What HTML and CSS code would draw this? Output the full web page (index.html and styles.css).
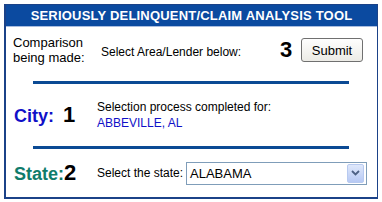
FILE: index.html
```html
<!DOCTYPE html>
<html>
<head>
<meta charset="utf-8">
<link rel="stylesheet" href="styles.css">
</head>
<body>
<div class="tool">
  <div class="header">SERIOUSLY DELINQUENT/CLAIM ANALYSIS TOOL</div>
  <div class="content">
    <div class="row row1">
      <div class="label-small">Comparison<br>being made:</div>
      <div class="middle">Select Area/Lender below:</div>
      <div class="num">3</div>
      <button class="submit">Submit</button>
    </div>
    <div class="rule"></div>
    <div class="row row2">
      <div class="lead"><span class="city">City:</span><span class="num num-gap">1</span></div>
      <div class="info">Selection process completed for:<br><span class="place">ABBEVILLE, AL</span></div>
    </div>
    <div class="rule"></div>
    <div class="row row3">
      <div class="lead"><span class="state">State:</span><span class="num">2</span></div>
      <div class="info">Select the state:</div>
      <div class="select">
        <span class="sel-text">ALABAMA</span>
        <span class="sel-btn"><svg width="9" height="6" viewBox="0 0 9 6"><path d="M1 1 L4.5 4.5 L8 1" fill="none" stroke="#4d6185" stroke-width="1.8"/></svg></span>
      </div>
    </div>
  </div>
</div>
</body>
</html>
```
FILE: styles.css
```css
html, body {
  margin: 0;
  padding: 0;
  background: #fff;
}
body {
  padding: 4px;
  font-family: "Liberation Sans", Arial, sans-serif;
}
.tool {
  width: 371px;
  border-left: 2px solid #1b4288;
  border-bottom: 2px solid #1b4288;
  border-right: 1px solid #1b4288;
  border-top: 1px solid #1b4288;
  box-sizing: content-box;
}
.header {
  background: #0b4aa0;
  color: #fff;
  font-weight: bold;
  font-size: 13px;
  letter-spacing: 0.2px;
  text-align: center;
  height: 21px;
  line-height: 21px;
  border-bottom: 1px solid #a9bde0;
}
.content {
  display: flex;
  flex-direction: column;
}
.row {
  display: flex;
  align-items: center;
}
.row1 {
  height: 46px;
  padding: 0 0 8px 7px;
}
.label-small {
  font-size: 13px;
  line-height: 15px;
  color: #000;
  width: 88px;
}
.middle {
  font-size: 12px;
  color: #000;
  width: 179px;
  padding-top: 3px;
}
.num {
  font-weight: bold;
  font-size: 22px;
  color: #000;
}
.num-gap {
  margin-left: 9px;
}
.row1 .num {
  width: 21px;
}
.submit {
  font-family: "Liberation Sans", Arial, sans-serif;
  font-size: 13px;
  width: 62px;
  height: 24px;
  padding: 0;
  background: linear-gradient(#fefefe, #ecebe6);
  border: 1px solid #707070;
  border-radius: 3px;
  color: #000;
}
.rule {
  height: 3px;
  background: #0b4a94;
  margin: 0 28px 0 27px;
}
.row2 {
  height: 62px;
  padding-left: 8px;
}
.lead {
  width: 83px;
  display: flex;
  align-items: baseline;
}
.city {
  color: #1010c8;
  font-weight: bold;
  font-size: 18px;
}
.state {
  color: #0f7c6b;
  font-weight: bold;
  font-size: 18px;
}
.info {
  font-size: 12px;
  line-height: 16px;
  color: #000;
}
.place {
  color: #1010c8;
}
.row3 {
  height: 48px;
  padding-left: 8px;
}
.row3 .info {
  width: 89px;
}
.select {
  width: 179px;
  height: 21px;
  border: 1px solid #7f9db9;
  display: flex;
  align-items: center;
  justify-content: space-between;
  font-size: 13px;
}
.sel-text {
  padding-left: 3px;
}
.sel-btn {
  width: 15px;
  height: 17px;
  margin-right: 2px;
  background: linear-gradient(#dfe8fb, #b7c9f4);
  border: 1px solid #b8caf0;
  border-radius: 2px;
  display: flex;
  align-items: center;
  justify-content: center;
}
```
